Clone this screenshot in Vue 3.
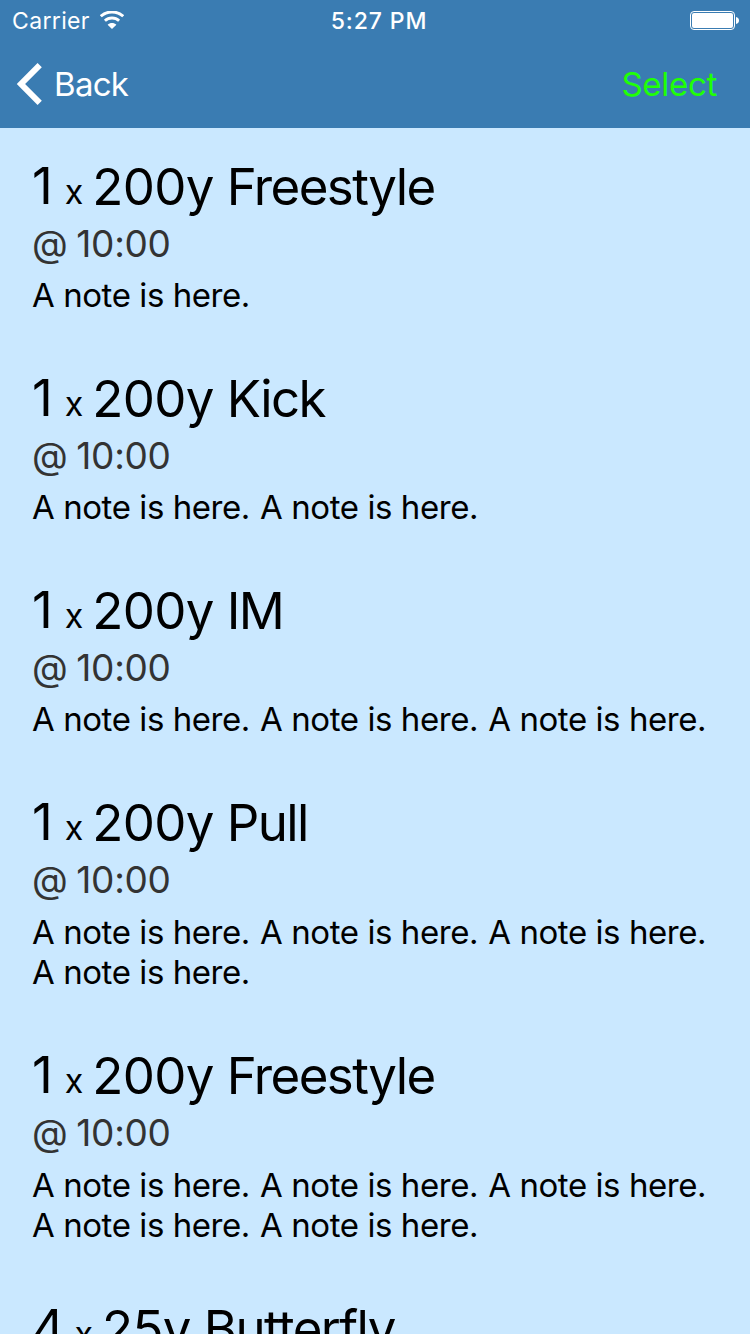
<script setup>
const sets = [
  { reps: 1, distance: '200y', stroke: 'Freestyle', notes: 1 },
  { reps: 1, distance: '200y', stroke: 'Kick', notes: 2 },
  { reps: 1, distance: '200y', stroke: 'IM', notes: 3 },
  { reps: 1, distance: '200y', stroke: 'Pull', notes: 4 },
  { reps: 1, distance: '200y', stroke: 'Freestyle', notes: 5 },
  { reps: 4, distance: '25y', stroke: 'Butterfly', notes: 0 },
]
</script>

<template>
  <main class="screen">
    <header class="top">
      <div class="status">
        <div class="carrier">
          <span>Carrier</span>
          <svg width="24" height="18" viewBox="0 0 24 18">
            <path d="M.8 5.300C7-.5 17-.5 23.200 5.300" fill="none" stroke="#fff" stroke-width="2.900" />
            <path d="M4.900 9.700c4-3.700 10.200-3.700 14.200 0" fill="none" stroke="#fff" stroke-width="2.900" />
            <path d="M12 18l-4.400-4.200c2.400-2.300 6.400-2.300 8.800 0z" fill="#fff" />
          </svg>
        </div>
        <span class="time">5:27 PM</span>
        <svg class="battery" width="49" height="19" viewBox="0 0 49 19">
          <rect x=".5" y=".5" width="44" height="18" rx="3.500" fill="none" stroke="#fff" />
          <rect x="2" y="2" width="41" height="15" rx="2" fill="#fff" />
          <path d="M46 6c4 .5 4 6.500 0 7z" fill="#fff" />
        </svg>
      </div>
      <nav class="nav">
        <div class="back">
          <svg width="26" height="42" viewBox="0 0 26 42" fill="none" stroke="#fff" stroke-width="6"><path d="M23.700 2.200L5 21l18.700 18.800" /></svg>
          <span>Back</span>
        </div>
        <span class="select">Select</span>
      </nav>
    </header>
    <section class="list">
      <article v-for="(s, i) in sets" :key="i" class="set">
        <h2>
          <span class="reps" :class="{ multi: s.reps > 1 }">{{ s.reps }}</span>
          <span class="x">x</span>
          <span class="distance">{{ s.distance }}</span>
          <span class="stroke">{{ s.stroke }}</span>
        </h2>
        <p class="interval">@ 10:00</p>
        <p class="note" :class="{ long: s.notes > 3 }">
          <template v-for="n in s.notes" :key="n"><span class="sentence">A note is here.</span>{{ ' ' }}</template>
        </p>
      </article>
    </section>
  </main>
</template>

<style>
html, body { margin: 0; height: 100%; overflow: hidden; }
</style>

<style scoped>
.screen { width: 750px; height: 1334px; overflow: hidden; background: #cae8ff; font-family: Inter, "Liberation Sans", sans-serif; color: #000; }
.top { height: 128px; background: #3a7cb2; color: #fff; }
.status { height: 41px; display: grid; grid-template-columns: 1fr auto 1fr; align-items: center; font-size: 23px; padding: 1px 11px 0 12px; box-sizing: border-box; }
.carrier { display: flex; align-items: center; gap: 10.500px; letter-spacing: .35px; }
.carrier svg { margin-top: -2px; }
.time { font-weight: 500; letter-spacing: .9px; margin-left: 7px; }
.battery { justify-self: end; margin-top: -2px; }
.nav { height: 86px; display: flex; justify-content: space-between; align-items: center; padding: 0 33px 0 16px; font-size: 33px; }
.back { display: flex; align-items: center; gap: 12px; letter-spacing: -.7px; }
.select { color: #20ff06; letter-spacing: -.3px; }
.list { padding: 25px 32px 0; }
.set { margin-bottom: 50px; }
h2 { margin: 0; font-weight: 400; font-size: 51px; height: 68px; line-height: 68px; display: flex; align-items: baseline; white-space: nowrap; }
.reps, .x { padding-bottom: 1px; transform: translateY(-1px); }
.reps.multi { letter-spacing: -2.500px; }
.x { font-size: 34px; margin: 0 9px 0 12px; }
.distance { letter-spacing: -.7px; margin-right: 13px; }
.stroke { letter-spacing: -1.550px; }
p { margin: 0; }
.interval { font-size: 37px; line-height: 44px; margin-top: 1px; color: #333; letter-spacing: -.3px; word-spacing: -1.200px; }
.note { padding-top: 9px; font-size: 33px; line-height: 40px; letter-spacing: -.43px; }
.note.long { padding-top: 10px; }
.sentence { margin-right: 1.300px; white-space: nowrap; }
</style>
